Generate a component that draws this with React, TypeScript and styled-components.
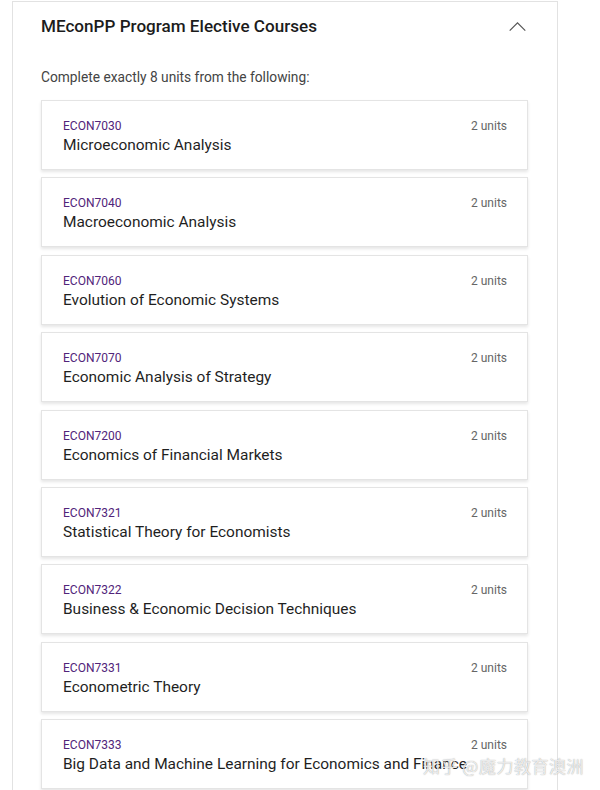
import styled, { createGlobalStyle } from 'styled-components'

const GlobalStyle = createGlobalStyle`
  html, body {
    margin: 0;
    padding: 0;
    background: #ffffff;
    font-family: Roboto, "Noto Sans", "Liberation Sans", sans-serif;
  }
`

const courses = [
  { code: 'ECON7030', name: 'Microeconomic Analysis' },
  { code: 'ECON7040', name: 'Macroeconomic Analysis' },
  { code: 'ECON7060', name: 'Evolution of Economic Systems' },
  { code: 'ECON7070', name: 'Economic Analysis of Strategy' },
  { code: 'ECON7200', name: 'Economics of Financial Markets' },
  { code: 'ECON7321', name: 'Statistical Theory for Economists' },
  { code: 'ECON7322', name: 'Business & Economic Decision Techniques' },
  { code: 'ECON7331', name: 'Econometric Theory' },
  { code: 'ECON7333', name: 'Big Data and Machine Learning for Economics and Finance' },
]

export default function App() {
  return (
    <>
      <GlobalStyle />
      <Page>
        <Panel>
          <Header>
            <Title>MEconPP Program Elective Courses</Title>
            <Chevron viewBox="0 0 20 12" aria-hidden>
              <path d="M1.5 10.5 L10 2 L18.5 10.5" fill="none" stroke="#555" strokeWidth="1.3" />
            </Chevron>
          </Header>
          <Intro>Complete exactly 8 units from the following:</Intro>
          <List>
            {courses.map((c) => (
              <Card key={c.code}>
                <CardText>
                  <Code>{c.code}</Code>
                  <Name>{c.name}</Name>
                </CardText>
                <Units>2 units</Units>
              </Card>
            ))}
          </List>
        </Panel>
        <Watermark>知乎 @魔力教育澳洲</Watermark>
      </Page>
    </>
  )
}

const Page = styled.div`
  position: relative;
  width: 600px;
  height: 790px;
  overflow: hidden;
  padding-top: 1px;
  box-sizing: border-box;
`

const Panel = styled.section`
  margin-left: 12px;
  width: 546px;
  min-height: 820px;
  box-sizing: border-box;
  border: 1px solid #e2e2e2;
  padding: 0 29px 0 28px;
`

const Header = styled.div`
  height: 48px;
  display: flex;
  align-items: center;
  justify-content: space-between;
`

const Title = styled.h2`
  margin: 0;
  font-size: 17.1px;
  font-weight: 500;
  color: #1c1c1c;
`

const Chevron = styled.svg`
  width: 19px;
  height: 11px;
  margin-right: 1px;
  margin-top: 0px;
`

const Intro = styled.p`
  margin: 17px 0 0;
  font-size: 13.75px;
  line-height: 20px;
  color: #444;
`

const List = styled.div`
  margin-top: 13px;
  display: flex;
  flex-direction: column;
  gap: 7.4px;
`

const Card = styled.div`
  display: flex;
  justify-content: space-between;
  align-items: flex-start;
  border: 1px solid #e4e4e4;
  box-shadow: 0 2px 3px rgba(0, 0, 0, 0.1);
  padding: 16px 20px 14px 21px;
  background: #fff;
`

const CardText = styled.div`
  display: flex;
  flex-direction: column;
  min-width: 0;
`

const Code = styled.span`
  font-size: 12px;
  line-height: 18px;
  color: #51247a;
`

const Name = styled.span`
  font-size: 15.45px;
  line-height: 20px;
  color: #1f1f1f;
  white-space: nowrap;
`

const Units = styled.span`
  flex-shrink: 0;
  font-size: 12px;
  line-height: 18px;
  color: #666;
`

const Watermark = styled.div`
  position: absolute;
  left: 423px;
  top: 753px;
  font-family: "Noto Sans CJK SC", sans-serif;
  font-size: 17px;
  color: rgba(255, 255, 255, 0.8);
  text-shadow: 0 0 1px rgba(120, 120, 120, 0.8);
  letter-spacing: 0.5px;
`
